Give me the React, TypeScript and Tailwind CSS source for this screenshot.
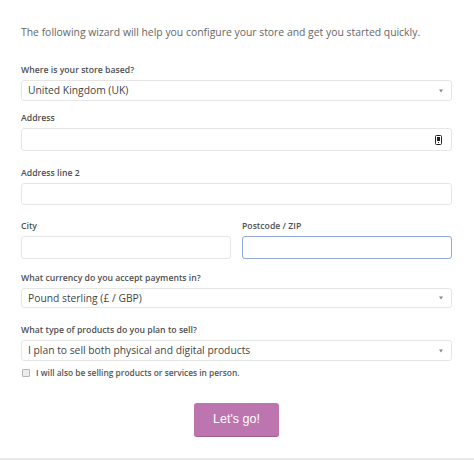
const font = "font-['Open_Sans','Noto_Sans',sans-serif]";

function Label({ children }: { children: React.ReactNode }) {
  return (
    <label className="block text-[8.7px] font-semibold leading-[14px] text-[#505050] mb-[3px]">
      {children}
    </label>
  );
}

function Select({ value, h }: { value: string; h: string }) {
  return (
    <div className={`relative flex items-center ${h} rounded-[3px] border border-[#e6e6e6] bg-white pl-[6px]`}>
      <span className="text-[10.3px] leading-none text-[#444]">{value}</span>
      {/* dropdown caret */}
      <span className="absolute right-[8px] top-1/2 -translate-y-1/2 w-0 h-0 border-l-[2.5px] border-r-[2.5px] border-t-[3px] border-l-transparent border-r-transparent border-t-[#888]" />
    </div>
  );
}

function Input({ focused, icon, h = "h-[23px]" }: { focused?: boolean; icon?: boolean; h?: string }) {
  return (
    <div
      className={
        focused
          ? `relative ${h} rounded-[3px] border border-[#93a9dd] bg-white`
          : `relative ${h} rounded-[3px] border border-[#e6e6e6] bg-white`
      }
    >
      {icon && (
        <svg
          className="absolute right-[9px] top-[6px]"
          width="7"
          height="10"
          viewBox="0 0 7 10"
        >
          <rect x="0.5" y="0.5" width="6" height="9" rx="1" fill="white" stroke="#222" />
          <rect x="2" y="2" width="3" height="4" fill="#222" />
          <rect x="3" y="7" width="1" height="1" fill="#222" />
        </svg>
      )}
    </div>
  );
}

export default function App() {
  return (
    <div className={`${font} w-[474px] h-[460px] bg-white flex flex-col`}>
      <div className="flex-1 pl-[21px] pr-[22px] pt-[24px]">
        {/* Intro */}
        <p className="text-[10.4px] leading-[16px] text-[#666] whitespace-nowrap">
          The following wizard will help you configure your store and get you started quickly.
        </p>

        <div className="mt-[23px]">
          <Label>Where is your store based?</Label>
          <Select value="United Kingdom (UK)" h="h-[21px]" />
        </div>

        <div className="mt-[10px]">
          <Label>Address</Label>
          <Input icon />
        </div>

        <div className="mt-[15px]">
          <Label>Address line 2</Label>
          <Input h="h-[22px]" />
        </div>

        <div className="mt-[14px] grid grid-cols-2 gap-[11px]">
          <div>
            <Label>City</Label>
            <Input />
          </div>
          <div>
            <Label>Postcode / ZIP</Label>
            <Input focused />
          </div>
        </div>

        <div className="mt-[12px]">
          <Label>What currency do you accept payments in?</Label>
          <Select value="Pound sterling (£ / GBP)" h="h-[20px]" />
        </div>

        <div className="mt-[15px]">
          <Label>What type of products do you plan to sell?</Label>
          <Select value="I plan to sell both physical and digital products" h="h-[21px]" />
        </div>

        <label className="mt-[6px] h-[12px] flex items-center gap-[6px]">
          <span className="ml-[1px] w-[8px] h-[8px] rounded-[1px] border border-[#b5b5b5] bg-[#ececec]" />
          <span className="text-[8.4px] font-semibold text-[#555] leading-[12px]">
            I will also be selling products or services in person.
          </span>
        </label>

        <div className="mt-[24px] flex justify-center">
          <button className="w-[85px] h-[33px] rounded-[3px] bg-[#bc75af] text-white text-[12.5px] font-['Liberation_Sans',Arial,sans-serif] shadow-[0_1px_0_#a35d96]">
            Let's go!
          </button>
        </div>
      </div>
      <div className="h-[2px] bg-[#e9e9e9]" />
    </div>
  );
}
